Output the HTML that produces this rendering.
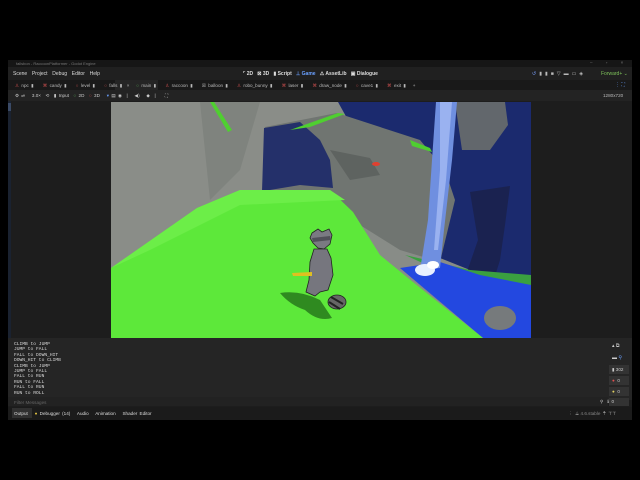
<!DOCTYPE html>
<html><head><meta charset="utf-8"><style>
*{margin:0;padding:0;box-sizing:border-box}
body{width:640px;height:480px;background:#000;position:relative;overflow:hidden;font-family:"Liberation Sans",sans-serif;color:#cfcfcf}
.a{position:absolute;white-space:nowrap}
.t{font-size:5px}
.mono{font-family:"Liberation Mono",monospace;font-size:4.6px;color:#d8d8d8;line-height:5.4px}
</style></head><body>
<div class="a" style="left:8px;top:60px;width:624px;height:360px;background:#1d1d1d"></div>
<div class="a" style="left:8px;top:60px;width:624px;height:7px;background:#161616"></div>
<div class="a t" style="left:16px;top:60.5px;font-size:4px;color:#777">fallsbon - RaccoonPlatformer - Godot Engine</div>
<div class="a t" style="left:590px;top:60px;font-size:4.5px;color:#777;letter-spacing:6px">– ▫ ×</div>
<div class="a" style="left:8px;top:67px;width:624px;height:13px;background:#202020"></div>
<div class="a t" style="left:13px;top:71px;color:#ddd;word-spacing:1px">Scene&nbsp; Project&nbsp; Debug&nbsp; Editor&nbsp; Help</div>
<div class="a t" style="left:243px;top:71px;color:#ddd;font-weight:bold">⌜ 2D&nbsp;&nbsp; ⊠ 3D&nbsp;&nbsp; <span>▮ Script</span>&nbsp;&nbsp; <span style="color:#6aa0ff">⊥ Game</span>&nbsp;&nbsp; ⚠ AssetLib&nbsp;&nbsp; ▣ Dialogue</div>
<div class="a t" style="left:532px;top:71px;color:#bbb;letter-spacing:3px"><span style="color:#7aa0ff">↺</span>▮▮■▽▬▭◈</div>
<div class="a t" style="left:601px;top:71px;color:#7dc05a">Forward+ ⌄</div>
<div class="a" style="left:8px;top:80px;width:624px;height:10px;background:#191919"></div>
<div class="a" style="left:115px;top:80px;width:43px;height:10px;background:#252525"></div>
<div class="a t" style="left:15px;top:82.5px;font-size:4.6px;color:#bbb;word-spacing:1px"><span style="color:#d05050">♙</span> npc ▮&nbsp;&nbsp;&nbsp; <span style="color:#d05050">⌘</span> candy ▮&nbsp;&nbsp;&nbsp; <span style="color:#d05050">○</span> level ▮&nbsp;&nbsp;&nbsp; <span style="color:#d05050">○</span> falls ▮&nbsp; ×&nbsp;&nbsp; <span style="color:#5ab05a">○</span> main ▮&nbsp;&nbsp;&nbsp; <span style="color:#d05050">♙</span> raccoon ▮&nbsp;&nbsp;&nbsp; ☒ balloon ▮&nbsp;&nbsp;&nbsp; <span style="color:#d05050">♙</span> robo_bunny ▮&nbsp;&nbsp;&nbsp; <span style="color:#d05050">⌘</span> laser ▮&nbsp;&nbsp;&nbsp; <span style="color:#d05050">⌘</span> draw_node ▮&nbsp;&nbsp;&nbsp; <span style="color:#d05050">○</span> cave1 ▮&nbsp;&nbsp;&nbsp; <span style="color:#d05050">⌘</span> exit ▮&nbsp;&nbsp; +</div>
<div class="a t" style="left:615px;top:82px;color:#6aa0ff">⋮ ⛶</div>
<div class="a" style="left:8px;top:90px;width:624px;height:11px;background:#232323"></div>
<div class="a t" style="left:15px;top:93px;font-size:4.6px;color:#ccc;word-spacing:1px">⚙ ⏯&nbsp;&nbsp; 3.0×&nbsp; ⟲&nbsp; ▮ Input&nbsp; <span style="color:#5ab05a">○</span> 2D&nbsp; <span style="color:#d05050">○</span> 3D&nbsp;&nbsp; <span style="color:#6aa0ff">▾</span> ▤ ◉&nbsp; |&nbsp;&nbsp; ◀)&nbsp;&nbsp; ◆&nbsp; |&nbsp;&nbsp;&nbsp; ⛶</div>
<div class="a t" style="left:603px;top:93px;font-size:4.6px;color:#bbb">1280x720</div>
<div class="a" style="left:8px;top:101px;width:3px;height:240px;background:#1a2230"></div>
<div class="a" style="left:8px;top:103px;width:3px;height:8px;background:#3a4a66"></div>
<svg class="a" style="left:111px;top:102px" width="420" height="236" viewBox="111 102 420 236">
<rect x="111" y="102" width="420" height="236" fill="#888c87"/>
<polygon points="111,102 340,102 300,140 260,190 111,268" fill="#8a8d88"/>
<polygon points="200,102 260,102 240,170 210,200" fill="#7f837e"/>
<polygon points="210,102 214,102 232,130 228,132" fill="#4fcf30"/>
<polygon points="338,102 531,102 531,290 470,270 420,250" fill="#1b2a6e"/>
<polygon points="265,127 337,113 420,140 445,170 455,200 440,262 400,250 360,225 330,195 262,192" fill="#707571"/>
<polygon points="264,128 300,122 320,140 330,160 333,188 300,185 270,190 262,192" fill="#24306a"/>
<polygon points="330,150 370,158 380,175 350,180" fill="#5e6360"/>
<polygon points="338,113 345,114 310,127 290,130" fill="#4fcf30"/>
<polygon points="410,140 430,148 432,152 412,146" fill="#4fcf30"/>
<polygon points="455,102 505,102 508,125 490,150 462,150" fill="#62676c"/>
<polygon points="470,192 510,186 505,225 500,260 490,292 460,292 478,240" fill="#1a2250"/>
<polygon points="405,255 470,270 531,275 531,290 460,280" fill="#3aa040"/>
<polygon points="400,268 440,262 480,275 531,285 531,338 483,338" fill="#2348e0"/>
<polygon points="436,102 457,102 452,160 444,230 440,268 420,270 428,220 432,160" fill="#6f8fe0"/>
<polygon points="440,102 452,102 446,180 438,250 434,250 440,170" fill="#9ab2f0"/>
<ellipse cx="425" cy="270" rx="10" ry="6" fill="#e8f0ff"/>
<ellipse cx="433" cy="265" rx="6" ry="4" fill="#fff"/>
<ellipse cx="376" cy="164" rx="4" ry="2" fill="#e04030"/>
<ellipse cx="500" cy="318" rx="16" ry="12" fill="#767a7c"/>
<polygon points="111,268 197,208 240,190 330,190 353,212 380,255 413,282 483,338 111,338" fill="#5de83a"/>
<polygon points="111,268 197,208 240,190 330,190 345,200 240,205 150,250" fill="#6cee48"/>
<path d="M280 293 Q300 290 320 300 L332 318 Q318 322 305 310 Q290 305 280 293Z" fill="#2f8a20"/>
<!-- raccoon -->
<polygon points="312,233 318,229 322,232 329,229 332,235 330,244 324,249 318,248 313,243 310,238" fill="#7a7a82" stroke="#222" stroke-width="0.8"/>
<polygon points="312,238 330,236 331,240 313,242" fill="#505058"/>
<polygon points="314,249 327,249 331,258 333,275 328,290 320,292 315,296 306,292 309,280 310,262" fill="#76767e" stroke="#222" stroke-width="0.8"/>
<polygon points="292,273 312,272 312,276 293,276" fill="#e0c020"/>
<ellipse cx="337" cy="302" rx="9" ry="7" fill="#666" stroke="#222" stroke-width="0.8"/>
<path d="M331 297 L343 304 M329 302 L340 309" stroke="#222" stroke-width="2"/>
</svg>
<div class="a" style="left:531px;top:101px;width:101px;height:240px;background:#1d1d1d"></div>
<div class="a" style="left:8px;top:338px;width:624px;height:62px;background:#252525"></div>
<div class="a mono" style="left:14px;top:342px">CLIMB to JUMP<br>JUMP to FALL<br>FALL to DOWN_HIT<br>DOWN_HIT to CLIMB<br>CLIMB to JUMP<br>JUMP to FALL<br>FALL to RUN<br>RUN to FALL<br>FALL to RUN<br>RUN to ROLL</div>
<div class="a" style="left:8px;top:397px;width:600px;height:9px;background:#222"></div>
<div class="a t" style="left:14px;top:399.5px;font-size:4.6px;color:#666">Filter Messages</div>
<div class="a t" style="left:612px;top:340px;color:#ccc;font-size:5px;line-height:12px">▴ ⧉<br>▬ <span style="color:#6aa0ff">⚲</span></div>
<div class="a" style="left:609px;top:365px;width:20px;height:9px;background:#333"></div>
<div class="a t" style="left:612px;top:367px;color:#ccc;font-size:4.6px">▮ 302</div>
<div class="a" style="left:609px;top:376px;width:20px;height:9px;background:#333"></div>
<div class="a t" style="left:612px;top:378px;font-size:4.6px;color:#ccc"><span style="color:#e05050">●</span>&nbsp; 0</div>
<div class="a" style="left:609px;top:387px;width:20px;height:9px;background:#333"></div>
<div class="a t" style="left:612px;top:389px;font-size:4.6px;color:#ccc"><span style="color:#e0d060">●</span>&nbsp; 0</div>
<div class="a" style="left:609px;top:398px;width:20px;height:8px;background:#333"></div>
<div class="a t" style="left:600px;top:399px;font-size:4.6px;color:#ccc">⚲&nbsp;&nbsp; ℹ&nbsp; 0</div>
<div class="a" style="left:8px;top:407px;width:624px;height:13px;background:#1b1b1b"></div>
<div class="a" style="left:12px;top:408px;width:20px;height:10px;background:#303030"></div>
<div class="a t" style="left:14px;top:410.5px;font-size:4.6px;color:#ddd;word-spacing:1px">Output&nbsp;&nbsp; <span style="color:#e0c040">●</span> Debugger (14)&nbsp;&nbsp; Audio&nbsp;&nbsp; Animation&nbsp;&nbsp; Shader Editor</div>
<div class="a t" style="left:568px;top:410.5px;font-size:4.6px;color:#888">⋮&nbsp; ⟁ 4.6.stable&nbsp; <span style="color:#ccc">⍑&nbsp; ⊤⊤</span></div>
</body></html>
